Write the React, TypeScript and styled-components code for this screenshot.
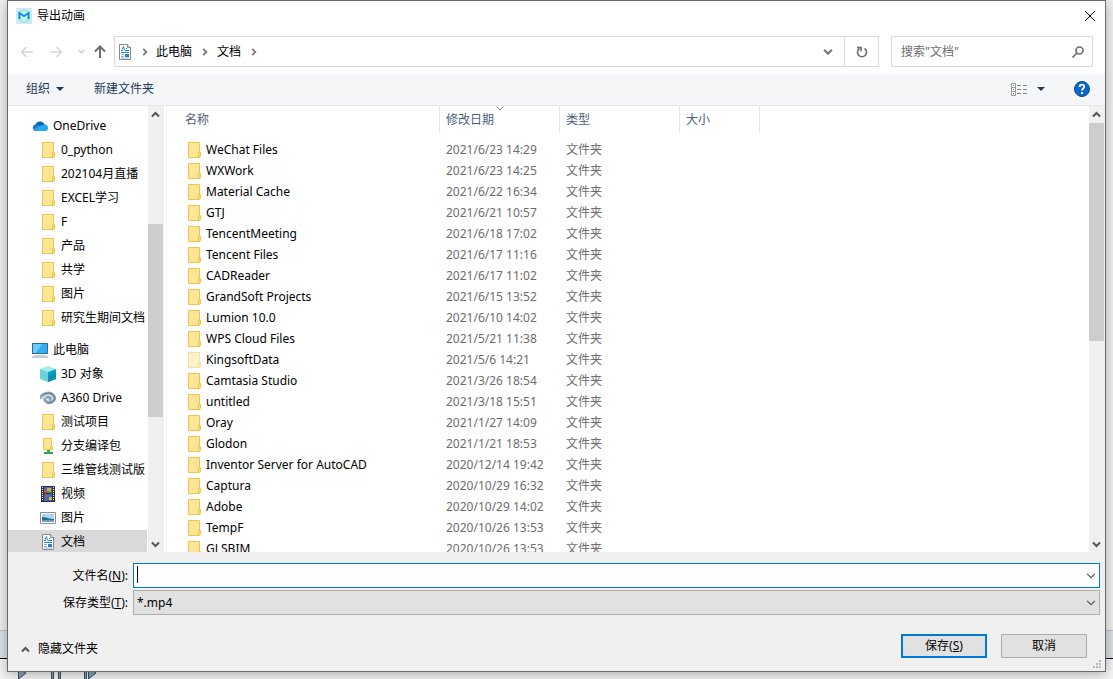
import React from 'react';
import styled, { createGlobalStyle } from 'styled-components';

const Global = createGlobalStyle`
  * { box-sizing: border-box; }
  body { margin: 0; background: #e4e4e4; }
  button, input, select { font: inherit; color: inherit; }
`;

const Page = styled.div`
  position: relative;
  height: 100vh;
  min-height: 400px;
  padding: 0 7px 7px;
  overflow: hidden;
  font: 12px/16px 'Noto Sans', 'Noto Sans CJK SC', sans-serif;
  color: #000;
`;

const Backdrop = styled.div`
  position: absolute;
  inset: 0;
  display: flex;
  flex-direction: column;
  justify-content: flex-end;
  background: #f0f0f0;
`;
const BackdropBand = styled.div`
  height: 29px;
  border-top: 1px solid #b4c0d4;
  border-bottom: 1px solid #000;
  background: #dce1e6;
`;
const BackdropPlayer = styled.div`
  height: 20px;
  padding: 10px 0 0 18px;
  background: #f4f4f4;
`;

const Dialog = styled.div`
  position: relative;
  display: flex;
  flex-direction: column;
  height: 100%;
  border: 1px solid #6a6a6a;
  background: #f0f0f0;
  box-shadow: 0 2px 12px rgba(0, 0, 0, 0.3);
`;

const TitleBar = styled.header`
  display: flex;
  align-items: center;
  gap: 5px;
  height: 29px;
  padding: 0 7px 0 8px;
  background: #fff;
`;
const Title = styled.h1`
  flex: 1;
  margin: 0;
  font-size: 12px;
  font-weight: 400;
`;

const IconButton = styled.button<{ $w?: number }>`
  display: flex;
  align-items: center;
  justify-content: center;
  flex: none;
  width: ${(p) => p.$w ?? 16}px;
  height: 16px;
  padding: 0;
  border: 0;
  background: transparent;
`;
const HelpButton = styled(IconButton)`
  margin-left: 21px;
`;

const NavBar = styled.nav`
  display: flex;
  align-items: center;
  height: 44px;
  padding: 0 12px 1px 9px;
  background: #fff;
`;
const NavArrows = styled.div`
  display: flex;
  align-items: center;
  width: 97px;
  padding-left: 2px;
  gap: 7px;
`;
const AddressBar = styled.div`
  display: flex;
  align-items: center;
  flex: 1;
  height: 31px;
  border: 1px solid #d9d9d9;
  padding-left: 2px;
`;
const CrumbMark = styled.span<{ $w: number }>`
  display: flex;
  justify-content: center;
  width: ${(p) => p.$w}px;
`;
const Crumb = styled.a`
  color: #000;
  text-decoration: none;
`;
const Refresh = styled.button`
  display: flex;
  align-items: center;
  justify-content: center;
  width: 34px;
  height: 29px;
  padding: 0;
  border: 0;
  border-left: 1px solid #d9d9d9;
  background: transparent;
`;
const SearchBox = styled.label`
  display: flex;
  align-items: center;
  width: 202px;
  height: 31px;
  margin-left: 12px;
  padding: 0 7px 0 9px;
  border: 1px solid #d9d9d9;
`;
const SearchInput = styled.input`
  flex: 1;
  min-width: 0;
  padding: 0;
  border: 0;
  outline: 0;
  background: transparent;
  &::placeholder { color: #6d6d6d; opacity: 1; }
`;

const CommandBar = styled.div`
  display: flex;
  align-items: center;
  height: 32px;
  padding: 0 15px 1px 18px;
  border-bottom: 1px solid #e5e8eb;
  background: #f5f6f7;
  color: #1e395b;
`;
const Command = styled.button`
  display: flex;
  align-items: center;
  gap: 6px;
  margin-right: 30px;
  padding: 0;
  border: 0;
  background: transparent;
`;
const Spacer = styled.div`
  flex: 1;
`;

const Browser = styled.main`
  display: flex;
  flex: 1;
  min-height: 0;
  background: #fff;
`;
const Tree = styled.ul`
  width: 139px;
  margin: 0 1px 0 0;
  padding: 8px 0 0;
  overflow: hidden;
  list-style: none;
`;
const TreeItem = styled.li<{ $root?: boolean; $selected?: boolean; $gap?: boolean }>`
  display: flex;
  align-items: center;
  gap: 5px;
  height: 24px;
  margin-top: ${(p) => (p.$gap ? 8 : 0)}px;
  padding-left: ${(p) => (p.$root ? 24 : 32)}px;
  background: ${(p) => (p.$selected ? '#d9d9d9' : 'transparent')};
  white-space: nowrap;
  > svg { flex: none; }
`;

const Scroll = styled.div`
  display: flex;
  flex-direction: column;
  flex: none;
  width: 16px;
  background: #f0f0f0;
`;
const Thumb = styled.div<{ $before: number; $size: number; $after: number }>`
  display: flex;
  flex-direction: column;
  flex: 1;
  &::before { content: ''; flex: ${(p) => p.$before}; }
  &::after { content: ''; flex: ${(p) => p.$after}; }
  > span { flex: ${(p) => p.$size}; width: 15px; background: #cdcdcd; }
`;

const ListPane = styled.section`
  flex: 1;
  min-width: 0;
  margin-left: 2px;
  padding-left: 12px;
  border-left: 1px solid #f4f4f4;
  overflow: hidden;
`;
const Table = styled.table`
  width: 580px;
  table-layout: fixed;
  border-collapse: separate;
  border-spacing: 0;
`;
const HeadCell = styled.th<{ $w: number }>`
  position: relative;
  width: ${(p) => p.$w}px;
  height: 27px;
  padding: 0 0 0 6px;
  border-right: 1px solid #e5e5e5;
  color: #4c607a;
  font-weight: 400;
  text-align: left;
`;
const SortMark = styled.svg`
  position: absolute;
  top: 0;
  left: 56px;
`;
const Cell = styled.td`
  height: 21px;
  padding: 0 0 0 6px;
  color: #6d6d6d;
  white-space: nowrap;
`;
const NameCell = styled(Cell)`
  padding-left: 7px;
  color: #000;
`;
const NameInner = styled.div`
  display: flex;
  align-items: center;
  gap: 4px;
`;
const TableBody = styled.tbody`
  &::before { content: ''; display: block; height: 6px; }
`;

const Form = styled.form`
  padding: 11px 5px 0;
`;
const FieldRow = styled.div`
  display: flex;
  align-items: center;
  margin-bottom: 2px;
`;
const FieldLabel = styled.label`
  width: 120px;
  padding-right: 5px;
  text-align: right;
`;
const Field = styled.div<{ $active?: boolean }>`
  position: relative;
  display: flex;
  flex: 1;
  height: 25px;
  border: 1px solid ${(p) => (p.$active ? '#0078d7' : '#adadad')};
  background: ${(p) => (p.$active ? '#fff' : '#e1e1e1')};
  > svg { position: absolute; right: 3px; top: 7px; pointer-events: none; }
`;
const NameInput = styled.input`
  flex: 1;
  padding: 0 3px;
  border: 0;
  outline: 0;
  background: transparent;
`;
const Caret = styled.span`
  position: absolute;
  left: 3px;
  top: 2px;
  width: 1px;
  height: 17px;
  background: #000;
`;
const TypeSelect = styled.select`
  flex: 1;
  padding: 0 3px;
  border: 0;
  outline: 0;
  appearance: none;
  background: transparent;
`;
const Footer = styled.footer`
  display: flex;
  align-items: center;
  height: 54px;
  padding: 4px 13px 0 8px;
`;
const HideFolders = styled.button`
  display: flex;
  align-items: center;
  gap: 8px;
  margin-top: 6px;
  padding: 0;
  border: 0;
  background: transparent;
`;
const ActionButton = styled.button<{ $primary?: boolean }>`
  width: 86px;
  height: 24px;
  margin-left: 14px;
  padding: 0;
  border: ${(p) => (p.$primary ? '2px solid #0078d7' : '1px solid #adadad')};
  background: #e1e1e1;
`;
const Grip = styled.svg`
  position: absolute;
  right: 3px;
  bottom: 2px;
`;

type ChevronProps = { dir?: 'up' | 'down' | 'right'; color?: string; size?: number; weight?: number };
const Chevron = ({ dir = 'down', color = '#555', size = 9, weight = 2 }: ChevronProps) => {
  const turn = { up: 180, down: 0, right: -90 }[dir];
  return (
    <svg width={size} height={size} viewBox="0 0 9 9">
      <path d="M1 2.5 4.5 6 8 2.5" fill="none" stroke={color} strokeWidth={weight} transform={`rotate(${turn} 4.5 4.5)`} />
    </svg>
  );
};

const FolderIcon = ({ faded }: { faded?: boolean }) => (
  <svg width="16" height="16" viewBox="0 0 16 16" opacity={faded ? 0.5 : 1}>
    <path d="M2.5.5h11v15h-11z" fill="#ffe694" stroke="#eac54f" />
    <path d="M12.5 10.5h2v4l-2 1z" fill="#ffdc74" stroke="#eac54f" />
  </svg>
);

const NetworkFolderIcon = () => (
  <svg width="16" height="16" viewBox="0 0 16 16">
    <path d="M3.5.5h8v11h-8z" fill="#ffe694" stroke="#eac54f" />
    <path d="M10.5 8.5h2v3h-2z" fill="#ffdc74" stroke="#eac54f" />
    <path d="M7 12h3v2h3v2H4v-2h3z" fill="#2fae3c" />
  </svg>
);

const DocumentIcon = () => (
  <svg width="16" height="16" viewBox="0 0 16 16">
    <path d="M2.5.5h8l3 3v12h-11z" fill="#fff" stroke="#8b8b8b" />
    <path d="M10.5.5v3h3" fill="#e6e6e6" stroke="#8b8b8b" />
    <path d="M4 6.5h2M5 5.5l1.500-3 1 4M9 4.5h1M8 6.5h4M4 8.5h8" fill="none" stroke="#1e87c9" />
    <path d="M4 10.5h3M4 12.5h3M4 14h8" fill="none" stroke="#8fb3cc" />
    <path d="M8 10h4v3H8z" fill="#3f7fae" />
  </svg>
);

const CloudIcon = () => (
  <svg width="16" height="16" viewBox="0 0 16 16">
    <path d="M3.5 6.5A5 5 0 0 1 12.800 6.8L9 10z" fill="#0364b8" />
    <path d="M3.5 13A3.5 3.5 0 0 1 3.5 6.2C6 5.8 8 8 10 10L7 13z" fill="#0b78d4" />
    <path d="M1.5 12.3C4 9 8 7.2 12.8 6.6A3.2 3.2 0 0 1 13 13H3.5Q2.2 13 1.5 12.3z" fill="#28a8ea" />
  </svg>
);

const PcIcon = () => (
  <svg width="16" height="16" viewBox="0 0 16 16">
    <path d="M.5 1.5h15v10H.5z" fill="#35adf5" stroke="#2c6a98" />
    <path d="M1 2h9L4 11H1z" fill="#6cc8ff" />
    <path d="M3 13.5h10" stroke="#c3cdd5" />
    <path d="M0 15h16" stroke="#8da0ae" />
  </svg>
);

const CubeIcon = () => (
  <svg width="16" height="16" viewBox="0 0 16 16">
    <path d="M0 3 8 0l8 3-8 3z" fill="#a5eaee" />
    <path d="M0 3l8 3v10l-8-3z" fill="#6bd3da" />
    <path d="M8 6l8-3v10l-8 3z" fill="#08a3c4" />
    <path d="M8 11l8-5v7l-8 3z" fill="#0d8fb3" />
  </svg>
);

const SwirlIcon = () => (
  <svg width="16" height="16" viewBox="0 0 16 16" fill="none">
    <path d="M1 9C0 4 9 1 13 5c4 4-1 9-6 7-3-1-3-5 1-5 3 0 3 2 1 3" stroke="#8ba4b3" strokeWidth="3" />
    <path d="M2 6c4-4 10-3 12 0 2 4-2 8-7 7" stroke="#587a90" />
    <path d="M1 8l5-1" stroke="#c2d1d9" strokeWidth="2" />
  </svg>
);

const VideoIcon = () => (
  <svg width="16" height="16" viewBox="0 0 16 16">
    <path d="M1 0h14v16H1z" fill="#333" />
    <path d="M4 1h8v6H4zM4 8h8v7H4z" fill="#3d6cc0" />
    <path d="M7 2h4v3H7zM9 11h3v3H9z" fill="#d8b13b" />
    <path d="M4 4h3v3H4zM5 9h3v2H5z" fill="#c15244" />
    <path d="M8 5h4v2H8z" fill="#4e9a53" />
    <path d="M2.5 1v14M13.5 1v14" stroke="#eee" strokeDasharray="1 1" />
  </svg>
);

const PictureIcon = () => (
  <svg width="16" height="16" viewBox="0 0 16 16">
    <path d="M.5 2.5h15v11H.5z" fill="#fff" stroke="#8d8d8d" />
    <path d="M2 4h12v8H2z" fill="#a8d7f4" />
    <path d="M2 7c4 0 7 2 12 2v1H2z" fill="#2e6a7e" />
    <path d="M2 10h12v2H2z" fill="#6d9fc4" />
  </svg>
);

const AppIcon = () => (
  <svg width="16" height="16" viewBox="0 0 16 16">
    <path d="M0 0h16v16H0z" fill="#cfe9f5" />
    <path d="M8 1.5 13.5 4.5v7L8 14.5l-5.5-3v-7z" fill="#c4f3e8" stroke="#7fe0cd" />
    <path d="M3.5 11v-6L8 8l4.5-3v6" fill="none" stroke="#1590e0" strokeWidth="2" />
  </svg>
);

const Arrow = ({ dir, color }: { dir: 'left' | 'right' | 'up'; color: string }) => (
  <svg width="14" height="14" viewBox="0 0 14 14">
    <path
      d="M13 7H2M6.5 2 1.5 7l5 5"
      fill="none"
      stroke={color}
      strokeWidth={dir === 'up' ? 2 : 1.5}
      transform={`rotate(${{ left: 0, right: 180, up: 90 }[dir]} 7 7)`}
    />
  </svg>
);

const Triangle = () => (
  <svg width="8" height="4" viewBox="0 0 8 4">
    <path d="M0 0h8L4 4z" fill="#1e395b" />
  </svg>
);

const icons = {
  folder: <FolderIcon />,
  network: <NetworkFolderIcon />,
  cloud: <CloudIcon />,
  pc: <PcIcon />,
  cube: <CubeIcon />,
  swirl: <SwirlIcon />,
  video: <VideoIcon />,
  picture: <PictureIcon />,
  document: <DocumentIcon />,
};

type TreeEntry = { label: string; icon: keyof typeof icons; root?: boolean; gap?: boolean; selected?: boolean };
const tree: TreeEntry[] = [
  { label: 'OneDrive', icon: 'cloud', root: true },
  { label: '0_python', icon: 'folder' },
  { label: '202104月直播', icon: 'folder' },
  { label: 'EXCEL学习', icon: 'folder' },
  { label: 'F', icon: 'folder' },
  { label: '产品', icon: 'folder' },
  { label: '共学', icon: 'folder' },
  { label: '图片', icon: 'folder' },
  { label: '研究生期间文档', icon: 'folder' },
  { label: '此电脑', icon: 'pc', root: true, gap: true },
  { label: '3D 对象', icon: 'cube' },
  { label: 'A360 Drive', icon: 'swirl' },
  { label: '测试项目', icon: 'folder' },
  { label: '分支编译包', icon: 'network' },
  { label: '三维管线测试版', icon: 'folder' },
  { label: '视频', icon: 'video' },
  { label: '图片', icon: 'picture' },
  { label: '文档', icon: 'document', selected: true },
];

const files: [string, string][] = [
  ['WeChat Files', '2021/6/23 14:29'],
  ['WXWork', '2021/6/23 14:25'],
  ['Material Cache', '2021/6/22 16:34'],
  ['GTJ', '2021/6/21 10:57'],
  ['TencentMeeting', '2021/6/18 17:02'],
  ['Tencent Files', '2021/6/17 11:16'],
  ['CADReader', '2021/6/17 11:02'],
  ['GrandSoft Projects', '2021/6/15 13:52'],
  ['Lumion 10.0', '2021/6/10 14:02'],
  ['WPS Cloud Files', '2021/5/21 11:38'],
  ['KingsoftData', '2021/5/6 14:21'],
  ['Camtasia Studio', '2021/3/26 18:54'],
  ['untitled', '2021/3/18 15:51'],
  ['Oray', '2021/1/27 14:09'],
  ['Glodon', '2021/1/21 18:53'],
  ['Inventor Server for AutoCAD', '2020/12/14 19:42'],
  ['Captura', '2020/10/29 16:32'],
  ['Adobe', '2020/10/29 14:02'],
  ['TempF', '2020/10/26 13:53'],
  ['GLSBIM', '2020/10/26 13:53'],
];

const ScrollBar = ({ before, size, after }: { before: number; size: number; after: number }) => (
  <Scroll>
    <IconButton type="button" aria-label="向上滚动" $w={15}><Chevron dir="up" /></IconButton>
    <Thumb $before={before} $size={size} $after={after}><span /></Thumb>
    <IconButton type="button" aria-label="向下滚动" $w={15}><Chevron /></IconButton>
  </Scroll>
);

export default function App() {
  return (
    <Page>
      <Global />
      <Backdrop>
        <BackdropBand />
        <BackdropPlayer>
          <svg width="80" height="10" viewBox="0 0 80 10" fill="#8fa3b3" stroke="#39536b">
            <path d="M.5-3v11L8 2zM33.5-3v11h2v-11zM40.5-3v11h2v-11zM66.5-3v11h2v-11zM70.5-3v11L78 2z" />
          </svg>
        </BackdropPlayer>
      </Backdrop>
      <Dialog role="dialog" aria-label="导出动画">
        <TitleBar>
          <AppIcon />
          <Title>导出动画</Title>
          <IconButton type="button" aria-label="关闭">
            <svg width="12" height="12" viewBox="0 0 12 12"><path d="m1 1 10 10M11 1 1 11" stroke="#000" /></svg>
          </IconButton>
        </TitleBar>
        <NavBar>
          <NavArrows>
            <IconButton type="button" aria-label="后退"><Arrow dir="left" color="#d6d6d6" /></IconButton>
            <IconButton type="button" aria-label="前进" $w={28}><Arrow dir="right" color="#d6d6d6" /></IconButton>
            <IconButton type="button" aria-label="最近的位置" $w={8}><Chevron size={7} color="#d0d0d0" /></IconButton>
            <IconButton type="button" aria-label="上移"><Arrow dir="up" color="#6e6e6e" /></IconButton>
          </NavArrows>
          <AddressBar>
            <DocumentIcon />
            <CrumbMark $w={23}><Chevron dir="right" size={8} color="#777" /></CrumbMark>
            <Crumb href="#pc">此电脑</Crumb>
            <CrumbMark $w={25}><Chevron dir="right" size={8} color="#777" /></CrumbMark>
            <Crumb href="#documents">文档</Crumb>
            <CrumbMark $w={25}><Chevron dir="right" size={8} color="#777" /></CrumbMark>
            <Spacer />
            <IconButton type="button" aria-label="以前的位置" $w={32}><Chevron size={10} color="#777" /></IconButton>
            <Refresh type="button" aria-label="刷新">
              <svg width="12" height="12" viewBox="0 0 12 12" fill="none" stroke="#6e6e6e" strokeWidth="1.6">
                <path d="M8.5 2.5A4.5 4.5 0 1 1 3.5 2.5M1 1.5h4v4" />
              </svg>
            </Refresh>
          </AddressBar>
          <SearchBox>
            <SearchInput aria-label="搜索" placeholder={'搜索"文档"'} />
            <svg width="14" height="14" viewBox="0 0 14 14" fill="none" stroke="#6e6e6e" strokeWidth="1.7">
              <circle cx="8.5" cy="5.5" r="3.5" />
              <path d="M6 8 1.5 12.5" />
            </svg>
          </SearchBox>
        </NavBar>
        <CommandBar>
          <Command type="button">组织 <Triangle /></Command>
          <Command type="button">新建文件夹</Command>
          <Spacer />
          <IconButton type="button" aria-label="视图" $w={17}>
            <svg width="17" height="13" viewBox="0 0 17 13" fill="none">
              <path d="M.5.5h4v12h-4zM.5 4.5h4M.5 8.5h4" stroke="#999" fill="#fff" />
              <path d="M6 2.5h4M12 2.5h4M6 6.5h4M12 6.5h4M6 10.5h4M12 10.5h4" stroke="#848484" />
              <path d="M2 2h1v1H2zM2 6h1v1H2z" fill="#4179c4" />
              <path d="M2 10h1v1H2z" fill="#d34a3e" />
            </svg>
          </IconButton>
          <IconButton type="button" aria-label="更多视图" $w={25}><Triangle /></IconButton>
          <HelpButton type="button" aria-label="帮助">
            <svg width="16" height="16" viewBox="0 0 16 16">
              <circle cx="8" cy="8" r="7.5" fill="#0b68cb" stroke="#084b91" />
              <path d="M5.7 6c0-3 4.6-3 4.6-.3C10.3 7.5 8 7.5 8 9.5M8 11v2" fill="none" stroke="#fff" strokeWidth="1.8" />
            </svg>
          </HelpButton>
        </CommandBar>
        <Browser>
          <Tree>
            {tree.map((t, i) => (
              <TreeItem key={i} $root={t.root} $gap={t.gap} $selected={t.selected}>
                {icons[t.icon]}
                {t.label}
              </TreeItem>
            ))}
          </Tree>
          <ScrollBar before={102} size={193} after={119} />
          <ListPane>
            <Table>
              <thead>
                <tr>
                  <HeadCell $w={261}>名称</HeadCell>
                  <HeadCell $w={120}>
                    修改日期
                    <SortMark width="8" height="5" viewBox="0 0 8 5"><path d="M.5.5 4 4 7.5.5" fill="none" stroke="#777" /></SortMark>
                  </HeadCell>
                  <HeadCell $w={120}>类型</HeadCell>
                  <HeadCell $w={80}>大小</HeadCell>
                </tr>
              </thead>
              <TableBody>
                {files.map(([name, date]) => (
                  <tr key={name}>
                    <NameCell><NameInner><FolderIcon faded={name === 'KingsoftData'} />{name}</NameInner></NameCell>
                    <Cell>{date}</Cell>
                    <Cell>文件夹</Cell>
                    <Cell />
                  </tr>
                ))}
              </TableBody>
            </Table>
          </ListPane>
          <ScrollBar before={1} size={217} after={195} />
        </Browser>
        <Form onSubmit={(e) => e.preventDefault()}>
          <FieldRow>
            <FieldLabel htmlFor="name">文件名(<u>N</u>):</FieldLabel>
            <Field $active><NameInput id="name" /><Caret /><Chevron weight={1} size={10} /></Field>
          </FieldRow>
          <FieldRow>
            <FieldLabel htmlFor="type">保存类型(<u>T</u>):</FieldLabel>
            <Field><TypeSelect id="type"><option>*.mp4</option></TypeSelect><Chevron weight={1} size={10} /></Field>
          </FieldRow>
          <Footer>
            <HideFolders type="button"><Chevron dir="up" />隐藏文件夹</HideFolders>
            <Spacer />
            <ActionButton type="submit" $primary>保存(<u>S</u>)</ActionButton>
            <ActionButton type="button">取消</ActionButton>
          </Footer>
        </Form>
        <Grip width="9" height="9" viewBox="0 0 9 9" fill="#b8b8b8">
          <path d="M6 0h2v2H6zM6 3h2v2H6zM3 3h2v2H3zM6 6h2v2H6zM3 6h2v2H3zM0 6h2v2H0z" />
        </Grip>
      </Dialog>
    </Page>
  );
}
